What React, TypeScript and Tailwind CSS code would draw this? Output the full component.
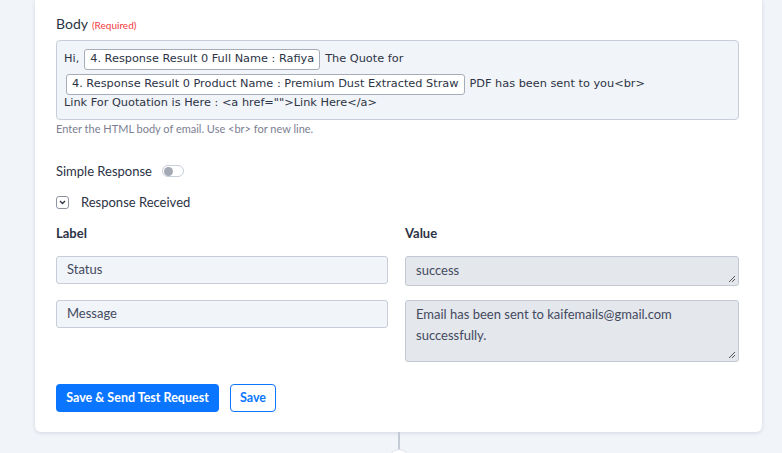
import React from 'react';

const ui = { fontFamily: 'Lato, "Open Sans", sans-serif' };
const editor = { fontFamily: '"DejaVu Sans", Verdana, sans-serif' };

const Tag = ({ children }: { children: React.ReactNode }) => (
  <span className="inline-flex h-[21px] items-center rounded-[3px] border border-[#a7adb8] bg-white px-[5px] text-[#2c3345]">
    {children}
  </span>
);

const ResizeGrip = () => (
  <svg className="absolute bottom-[2px] right-[2px]" width="8" height="8" viewBox="0 0 8 8">
    <path d="M7 1L1 7M7 4L4 7" stroke="#555" strokeWidth="1" />
  </svg>
);

const fields = [
  { label: 'Status', value: 'success', h: 'h-[30px]' },
  { label: 'Message', value: 'Email has been sent to kaifemails@gmail.com successfully.', h: 'h-[62px]' },
];

export default function App() {
  return (
    <div className="relative h-[453px] w-[782px] overflow-hidden bg-[#f1f4f8]" style={ui}>
      <div className="ml-[35px] w-[727px] rounded-b-[6px] bg-white pl-[21px] pr-[23px] pt-[13px] pb-[20px] shadow-[0_1px_4px_rgba(37,45,91,0.14)]">
        {/* body field */}
        <div className="flex items-baseline gap-[4px] text-[#2c3345]">
          <span className="text-[14px]">Body</span>
          <span className="text-[10px] text-[#f23a3c]">(Required)</span>
        </div>
        <div
          className="mt-[6px] h-[80px] w-[683px] rounded-[4px] border border-[#c8ced9] bg-[#f1f4f8] px-[7px] pt-[8px] text-[11.3px] text-[#2c3345]"
          style={editor}
        >
          <div className="flex h-[21px] items-center gap-[5px]">
            <span>Hi,</span>
            <Tag>4. Response Result 0 Full Name : Rafiya</Tag>
            <span>The Quote for</span>
          </div>
          <div className="mt-[4px] flex h-[21px] items-center gap-[5px] pl-[2px]">
            <Tag>4. Response Result 0 Product Name : Premium Dust Extracted Straw</Tag>
            <span>PDF has been sent to you&lt;br&gt;</span>
          </div>
          <div className="leading-[16px]">Link For Quotation is Here : &lt;a href=""&gt;Link Here&lt;/a&gt;</div>
        </div>
        <p className="mt-[1px] text-[11px] text-[#7b8091]">Enter the HTML body of email. Use &lt;br&gt; for new line.</p>

        {/* response options */}
        <div className="mt-[24px] flex items-center gap-[10px] text-[13px] text-[#2c3345]">
          <span>Simple Response</span>
          <span className="flex h-[12px] w-[22px] items-center rounded-full border border-[#c8ced9] bg-white px-[1px]">
            <span className="h-[9px] w-[9px] rounded-full bg-[#a4aab5]" />
          </span>
        </div>
        <div className="mt-[12px] flex items-center gap-[12px] text-[13px] text-[#2c3345]">
          <span className="flex h-[13px] w-[13px] items-center justify-center rounded-[3px] border border-[#8d93a0]">
            <svg width="7" height="5" viewBox="0 0 7 5">
              <path d="M1 1l2.5 2.5L6 1" fill="none" stroke="#2c3345" strokeWidth="1.3" />
            </svg>
          </span>
          <span>Response Received</span>
        </div>

        {/* label / value table */}
        <div className="mt-[11px] grid w-[683px] grid-cols-[332px_1fr] gap-x-[17px] text-[13px]">
          <div className="font-bold text-[#2c3345]">Label</div>
          <div className="font-bold text-[#2c3345]">Value</div>
          {fields.map((f, i) => (
            <React.Fragment key={f.label}>
              <div
                className={`${i === 0 ? 'mt-[13px]' : 'mt-[14px]'} flex h-[28px] items-center rounded-[3px] border border-[#c8ced9] bg-[#f1f4f8] px-[10px] text-[#434a5e]`}
              >
                {f.label}
              </div>
              <div
                className={`relative ${i === 0 ? 'mt-[13px]' : 'mt-[14px]'} ${f.h} rounded-[3px] border border-[#c3c9d4] bg-[#e4e7ec] px-[10px] pt-[3px] leading-[21px] text-[#434a5e]`}
              >
                {f.value}
                <ResizeGrip />
              </div>
            </React.Fragment>
          ))}
        </div>

        {/* actions */}
        <div className="mt-[22px] flex gap-[11px] text-[12.5px] font-bold">
          <button className="h-[28px] w-[163px] rounded-[4px] bg-[#0a75ff] text-white">Save &amp; Send Test Request</button>
          <button className="h-[28px] w-[46px] rounded-[4px] border border-[#0a75ff] bg-white text-[#0a75ff]">Save</button>
        </div>
      </div>

      {/* flow connector */}
      <div className="absolute left-[398px] top-[432px] h-[30px] w-[2px] bg-[#c5cbd6]" />
      <div className="absolute left-[389px] top-[449px] h-[20px] w-[20px] rounded-full border border-[#dde2ea] bg-white" />
    </div>
  );
}
